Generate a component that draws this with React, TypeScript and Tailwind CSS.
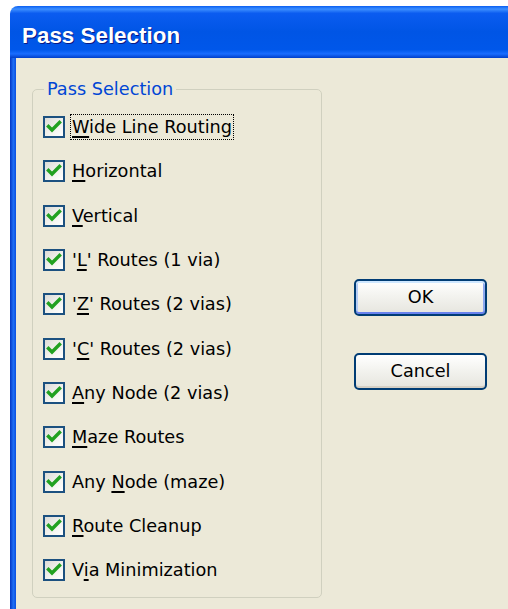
const passes: { label: string; key: number }[] = [
  { label: 'Wide Line Routing', key: 0 },
  { label: 'Horizontal', key: 0 },
  { label: 'Vertical', key: 0 },
  { label: "'L' Routes (1 via)", key: 1 },
  { label: "'Z' Routes (2 vias)", key: 1 },
  { label: "'C' Routes (2 vias)", key: 1 },
  { label: 'Any Node (2 vias)', key: 0 },
  { label: 'Maze Routes', key: 0 },
  { label: 'Any Node (maze)', key: 4 },
  { label: 'Route Cleanup', key: 0 },
  { label: 'Via Minimization', key: 1 },
]

function Mnemonic({ text, at }: { text: string; at: number }) {
  return (
    <>
      {text.slice(0, at)}
      <u className="decoration-[1.5px] underline-offset-[3px]">{text[at]}</u>
      {text.slice(at + 1)}
    </>
  )
}

function CheckBox() {
  return (
    <span className="flex h-[22px] w-[22px] shrink-0 items-center justify-center border-2 border-[#1c5180] bg-[linear-gradient(135deg,#dcdcd7,#f4f4f0_60%,#ffffff)]">
      <svg width="18" height="18" viewBox="0 0 18 18">
        <path
          d="M3.5 8.5 L7 12 L14.5 4.5"
          fill="none"
          stroke="#21a121"
          strokeWidth="3.4"
          strokeLinecap="square"
        />
      </svg>
    </span>
  )
}

function XpButton({ label, isDefault }: { label: string; isDefault?: boolean }) {
  return (
    <button
      className={
        isDefault
          ? 'h-[37px] w-[133px] rounded-[5px] border-2 border-[#003c74] bg-[linear-gradient(#ffffff,#f3f3ef_45%,#e6e5de)] text-[17.7px] leading-none text-black shadow-[inset_0_2px_0_#cee7ff,inset_0_-2px_0_#6982ee,inset_2px_0_0_#b4ccf4,inset_-2px_0_0_#8ea9ef]'
          : 'h-[37px] w-[133px] rounded-[5px] border-2 border-[#003c74] bg-[linear-gradient(#ffffff,#f3f3ef_45%,#e6e5de)] text-[17.7px] leading-none text-black shadow-[inset_0_-2px_0_#d6d0c5]'
      }
    >
      {label}
    </button>
  )
}

export default function App() {
  return (
    <div className="h-[609px] w-[508px] overflow-hidden bg-white font-['DejaVu_Sans',sans-serif]">
      <div className="ml-[10px] mt-[6px] flex h-[603px] w-[520px] flex-col overflow-hidden rounded-tl-[8px]">
        {/* title bar */}
        <div className="flex h-[52px] shrink-0 items-center bg-[linear-gradient(#0a5ff2,#3d8fff_6%,#0b5cf0_14%,#0055e5_50%,#0057ea_84%,#1a6dff_92%,#003ec9)] pl-[12px] pt-[8px]">
          <span className="font-['Liberation_Sans',sans-serif] text-[22.4px] font-bold leading-[22px] text-white [text-shadow:1px_1px_0_#0a1883]">
            Pass Selection
          </span>
        </div>

        <div className="flex flex-1">
          <div className="w-[6px] shrink-0 bg-[linear-gradient(to_right,#0034c4,#1f6ff5_55%,#0a4fe0)]" />

          <div className="flex flex-1 items-start bg-[#ece9d8] pl-[16px] pt-[21px]">
            <fieldset className="w-[290px] rounded-[5px] border border-[#d0d0bf] pl-[10px] pb-[5px] pt-[6px]">
              <legend className="ml-[1px] px-[3px] text-[17.7px] leading-[20px] text-[#0046d5]">
                Pass Selection
              </legend>
              {passes.map((p, i) => (
                <div key={p.label} className="flex h-[44.3px] items-center gap-[5px]">
                  <CheckBox />
                  <span
                    className={
                      i === 0
                        ? 'border border-dotted border-black px-[1px] py-[1px] text-[17.7px] leading-[22px] text-black'
                        : 'border border-transparent px-[1px] py-[1px] text-[17.7px] leading-[22px] text-black'
                    }
                  >
                    <Mnemonic text={p.label} at={p.key} />
                  </span>
                </div>
              ))}
            </fieldset>

            <div className="ml-[32px] mt-[200px] flex flex-col gap-[37px]">
              <XpButton label="OK" isDefault />
              <XpButton label="Cancel" />
            </div>
          </div>
        </div>
      </div>
    </div>
  )
}
